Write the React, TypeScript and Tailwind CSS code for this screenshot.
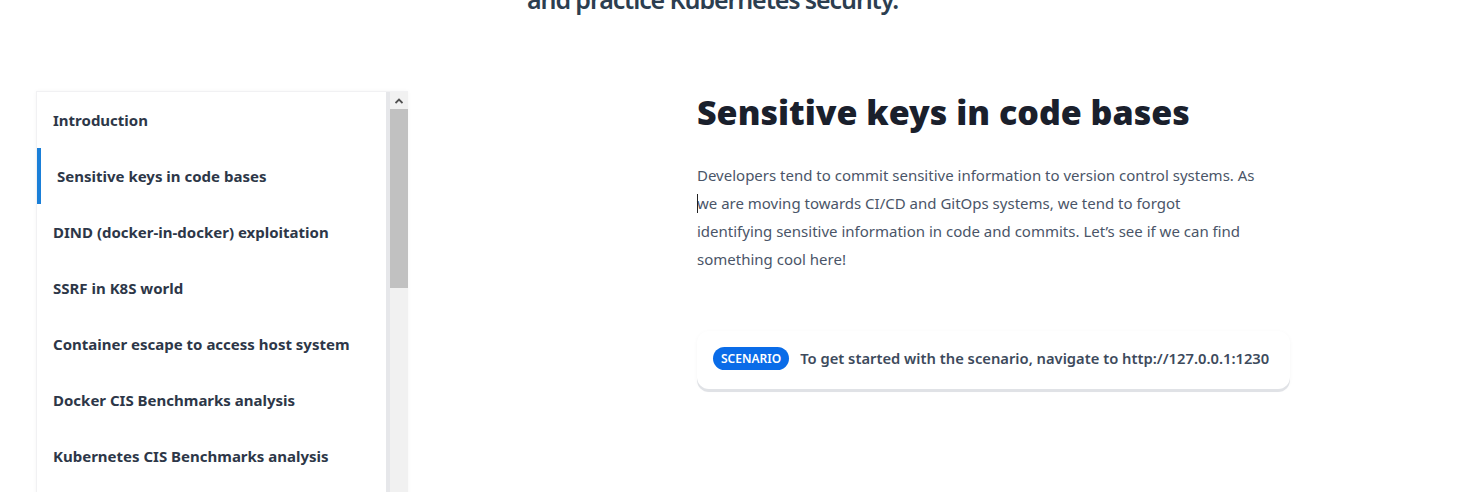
import React from "react";

const items = [
  "Introduction",
  "Sensitive keys in code bases",
  "DIND (docker-in-docker) exploitation",
  "SSRF in K8S world",
  "Container escape to access host system",
  "Docker CIS Benchmarks analysis",
  "Kubernetes CIS Benchmarks analysis",
];

export default function App() {
  return (
    <div
      className="w-[1460px] h-[492px] overflow-hidden bg-white"
      style={{ fontFamily: '"Noto Sans", "Open Sans", sans-serif' }}
    >
      <h2 className="mt-[-17px] ml-[527px] text-[25px] leading-[32px] tracking-[-1.1px] font-semibold text-[#2c3e50] whitespace-nowrap">
        and practice Kubernetes security.
      </h2>
      <div className="flex mt-[76px]">
        <aside className="ml-[36px] w-[372px] h-[420px] flex border-l border-t border-[#f1f1f3] shadow-[0_0_4px_rgba(0,0,0,0.04)]">
          <ul className="w-[349px] flex flex-col">
            {items.map((t, i) => (
              <li
                key={t}
                className={
                  "h-[56px] shrink-0 flex items-center text-[15px] font-bold text-[#2d3748] whitespace-nowrap " +
                  (i === 1 ? "border-l-4 border-[#1a7fd8] pl-[16px]" : "pl-[16px]")
                }
              >
                {t}
              </li>
            ))}
          </ul>
          <div className="w-[4px] bg-[#e6e7ea]" />
          <div className="w-[18px] flex flex-col bg-[#f1f1f1]">
            <div className="h-[17px] flex items-center justify-center">
              <svg width="8" height="6" viewBox="0 0 8 6">
                <path d="M0.5 5 L4 1.5 L7.5 5" stroke="#505050" strokeWidth="1.8" fill="none" />
              </svg>
            </div>
            <div className="h-[179px] bg-[#c1c1c1]" />
          </div>
        </aside>
        <main className="ml-[289px] mt-[-1px]">
          <h1 className="text-[34px] leading-[44px] font-black text-[#1a202c] whitespace-nowrap">
            Sensitive keys in code bases
          </h1>
          <p className="mt-[27px] w-[580px] text-[15px] leading-[28px] text-[#4a5568]">
            <span className="block whitespace-nowrap">
              Developers tend to commit sensitive information to version control systems. As
            </span>
            <span className="block whitespace-nowrap relative">
              <span className="absolute left-0 top-[5px] w-px h-[19px] bg-[#222]" />
              we are moving towards CI/CD and GitOps systems, we tend to forgot
            </span>
            <span className="block whitespace-nowrap">
              identifying sensitive information in code and commits. Let’s see if we can find
            </span>
            <span className="block whitespace-nowrap">something cool here!</span>
          </p>
          <div className="mt-[58px] w-[593px] h-[58px] pb-[3px] rounded-xl bg-white shadow-[0_3px_0_#e0e2e6,0_1px_4px_rgba(0,0,0,0.04)] flex items-center pl-[16px]">
            <span className="h-[23px] px-[8px] rounded-full bg-[#0a6ce8] text-white text-[12px] font-semibold flex items-center">
              SCENARIO
            </span>
            <span className="ml-[11px] text-[14.75px] font-semibold text-[#3d4a5c] whitespace-nowrap">
              To get started with the scenario, navigate to http://127.0.0.1:1230
            </span>
          </div>
        </main>
      </div>
    </div>
  );
}
